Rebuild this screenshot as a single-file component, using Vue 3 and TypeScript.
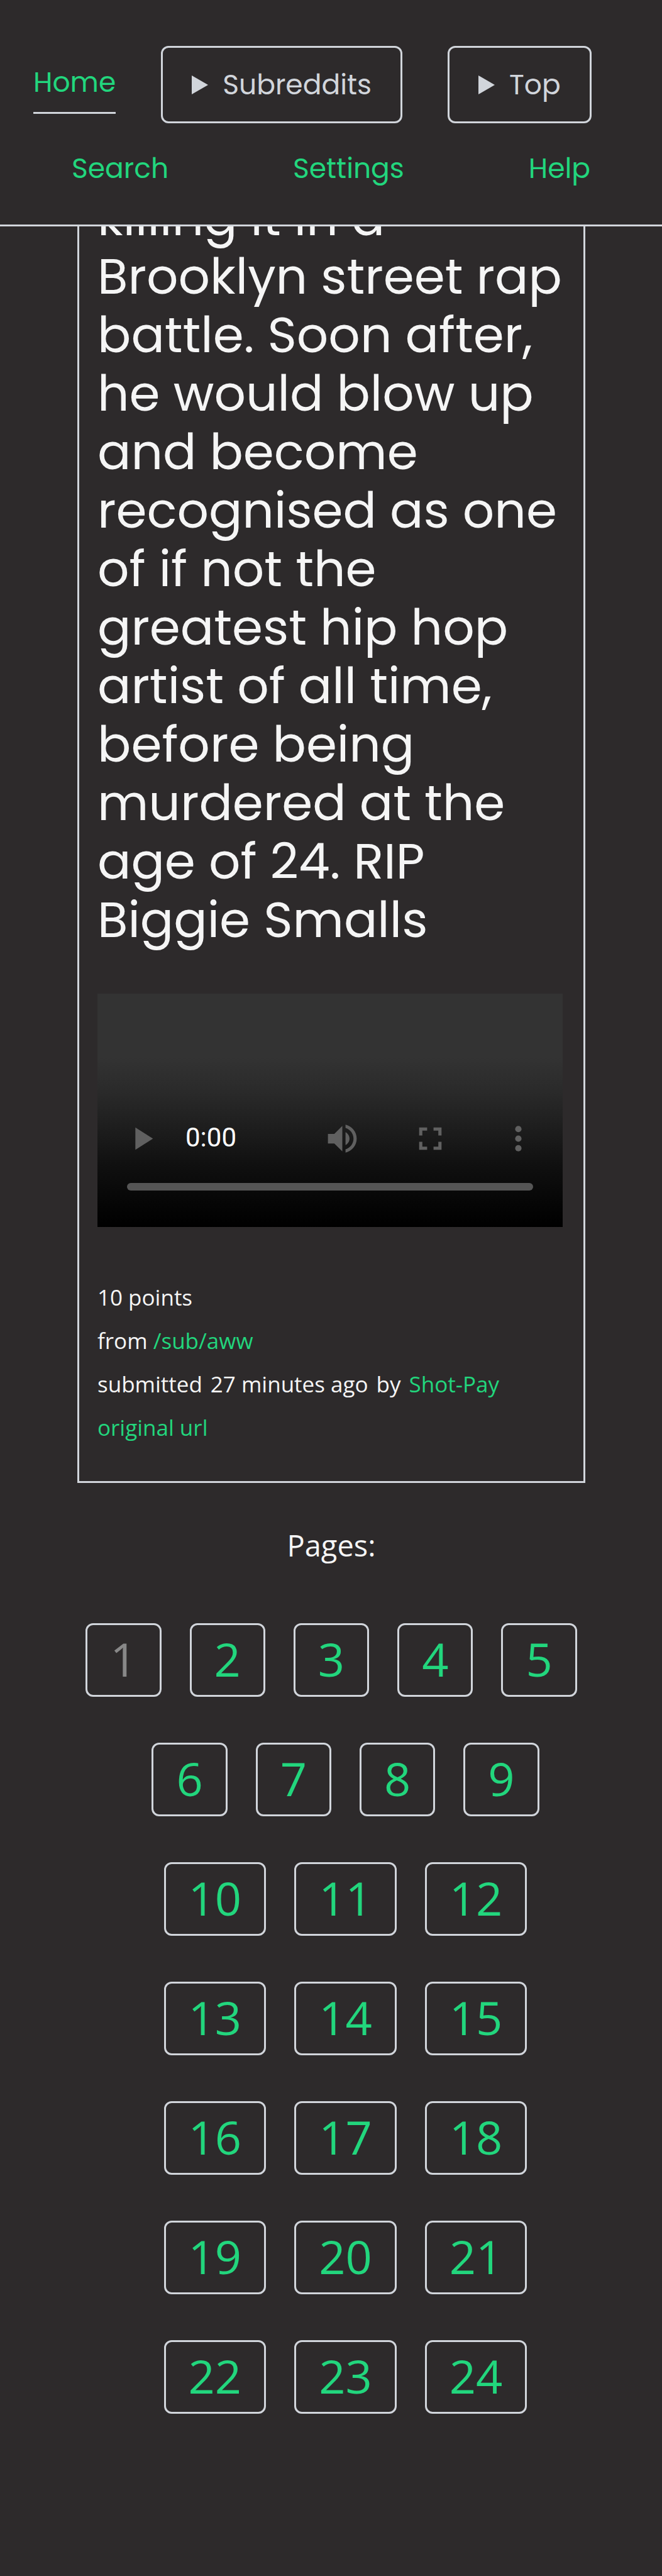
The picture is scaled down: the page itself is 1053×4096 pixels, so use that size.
<script setup lang="ts">
import { ref } from 'vue'

interface NavLink {
  label: string
  href: string
}

const links: NavLink[] = [
  { label: 'Search', href: '#search' },
  { label: 'Settings', href: '#settings' },
  { label: 'Help', href: '#help' },
]

const menus: string[] = ['Subreddits', 'Top']

const currentPage = ref(1)
const pages: number[] = Array.from({ length: 24 }, (_, i) => i + 1)
const position = ref(0)
</script>

<template>
  <div class="page">
    <header class="header">
      <nav class="nav">
        <div class="nav-main">
          <a class="nav-link active" href="#home">Home</a>
          <details v-for="menu in menus" :key="menu" class="menu">
            <summary>
              <svg class="caret" viewBox="0 0 26 30" aria-hidden="true"><path d="M0 0L26 15L0 30Z" /></svg>
              <span>{{ menu }}</span>
            </summary>
          </details>
        </div>
        <div class="nav-more">
          <a v-for="link in links" :key="link.label" class="nav-link" :href="link.href">{{ link.label }}</a>
        </div>
      </nav>
    </header>

    <main class="content">
      <article class="post">
        <h2 class="title">
          killing it in a Brooklyn street rap battle. Soon after, he would blow up and become
          recognised as one of if not the greatest hip hop artist of all time, before being
          murdered at the age of 24. RIP Biggie Smalls
        </h2>

        <div class="player">
          <div class="controls">
            <button type="button" aria-label="Play">
              <svg viewBox="0 0 24 24"><path d="M8 5v14l11-7z" /></svg>
            </button>
            <span class="time">0:00</span>
            <button type="button" aria-label="Mute">
              <svg viewBox="0 0 24 24">
                <path d="M3 9v6h4l5 5V4L7 9H3zM14 7.97v8.05c1.48-.73 2.5-2.25 2.5-4.02s-1.02-3.29-2.5-4.03zM14 3.23v2.06c2.89.86 5 3.54 5 6.71s-2.11 5.85-5 6.71v2.06c4.01-.91 7-4.49 7-8.77s-2.99-7.86-7-8.77z" />
              </svg>
            </button>
            <button type="button" aria-label="Full screen">
              <svg viewBox="0 0 24 24">
                <path d="M7 14H5v5h5v-2H7v-3zm-2-4h2V7h3V5H5v5zm12 7h-3v2h5v-5h-2v3zM14 5v2h3v3h2V5h-5z" />
              </svg>
            </button>
            <button type="button" aria-label="More options">
              <svg viewBox="0 0 24 24">
                <circle cx="12" cy="6" r="2" /><circle cx="12" cy="12" r="2" /><circle cx="12" cy="18" r="2" />
              </svg>
            </button>
          </div>
          <input v-model.number="position" class="timeline" type="range" min="0" max="100" aria-label="Playback position" />
        </div>

        <div class="meta">
          <p>10 points</p>
          <p>from <a href="#sub-aww">/sub/aww</a></p>
          <p class="submitted">
            <span>submitted</span><span>27 minutes ago</span><span>by</span><a href="#shot-pay">Shot-Pay</a>
          </p>
          <p><a href="#original">original url</a></p>
        </div>
      </article>

      <p class="pages-label">Pages:</p>
      <nav class="pagination" aria-label="Pages">
        <a
          v-for="page in pages"
          :key="page"
          :href="`#page-${page}`"
          :class="{ current: page === currentPage }"
        >{{ page }}</a>
      </nav>
    </main>
  </div>
</template>

<style>
body {
  margin: 0;
  background: #2d2a2b;
}
</style>

<style scoped>
.page {
  background: #2d2a2b;
  color: #f5f5f5;
  font-family: "Open Sans", "Noto Sans", sans-serif;
  font-size: 35px;
}

a {
  color: #22d67d;
  text-decoration: none;
}

p {
  margin: 0;
}

.header {
  box-sizing: border-box;
  height: 360px;
  padding-top: 73px;
  background: #2d2a2b;
  border-bottom: 3px solid #d1d5db;
}

.nav,
.title {
  font-family: Poppins, Inter, sans-serif;
  font-feature-settings: "cv11";
}

.nav {
  font-size: 44px;
  line-height: 64px;
}

.nav-main {
  display: flex;
  align-items: flex-start;
  gap: 72px;
  padding: 0 53px;
}

.nav-main .nav-link {
  margin-top: 26px;
  padding-bottom: 15px;
}

.active {
  border-bottom: 3px solid #d1d5db;
}

.menu {
  color: #d1d5db;
}

.menu summary {
  display: flex;
  align-items: center;
  gap: 23px;
  box-sizing: border-box;
  height: 123px;
  padding: 0 46px;
  border: 3px solid #d1d5db;
  border-radius: 12px;
  cursor: pointer;
  list-style: none;
}

.caret {
  width: 26px;
  height: 30px;
  fill: currentColor;
}

.nav-more {
  display: flex;
  justify-content: space-between;
  margin-top: 40px;
  padding: 0 114px;
}

.content {
  overflow: hidden;
  padding: 0 122px 258px 123px;
}

.post {
  margin-top: -63px;
  padding: 0 33px 51px 29px;
  border: 3px solid #d1d5db;
}

.title {
  margin: 0 -16px 71px 0;
  font-size: 79px;
  font-weight: 400;
  line-height: 93px;
}

.player {
  display: flex;
  flex-direction: column;
  justify-content: flex-end;
  gap: 40px;
  box-sizing: border-box;
  height: 371px;
  padding: 0 40px 58px;
  background: linear-gradient(#333 27%, #2a2a2a 42%, #191919 63%, #101010 73%, #060606 89%, #000);
}

.controls {
  display: flex;
  align-items: center;
  gap: 79px;
}

.controls button {
  display: block;
  width: 61px;
  height: 61px;
  padding: 0;
  background: none;
  border: 0;
}

.controls svg {
  display: block;
  width: 61px;
  height: 61px;
  fill: #606060;
}

.time {
  margin-left: -40px;
  margin-right: auto;
  padding-bottom: 4px;
  color: #fff;
  font-family: Roboto, sans-serif;
  font-size: 42px;
  line-height: 56px;
}

.timeline {
  appearance: none;
  height: 12px;
  margin: 0 7px;
  background: #555;
  border-radius: 6px;
}

.timeline::-webkit-slider-thumb {
  appearance: none;
  width: 12px;
  height: 12px;
  background: transparent;
}

.meta {
  margin-top: 77px;
  line-height: 69px;
}

.submitted {
  display: flex;
  gap: 13px;
}

.pages-label {
  margin-top: 67px;
  font-size: 47px;
  line-height: 64px;
  text-align: center;
}

.pagination {
  display: flex;
  flex-wrap: wrap;
  justify-content: center;
  row-gap: 73px;
  margin-top: 92px;
}

.pagination a {
  padding: 0 36px 4px;
  border: 3px solid #d1d5db;
  border-radius: 12px;
  font-size: 74px;
  line-height: 107px;
}

.pagination a + a {
  margin-left: 45px;
}

.pagination .current {
  color: #888;
}
</style>
